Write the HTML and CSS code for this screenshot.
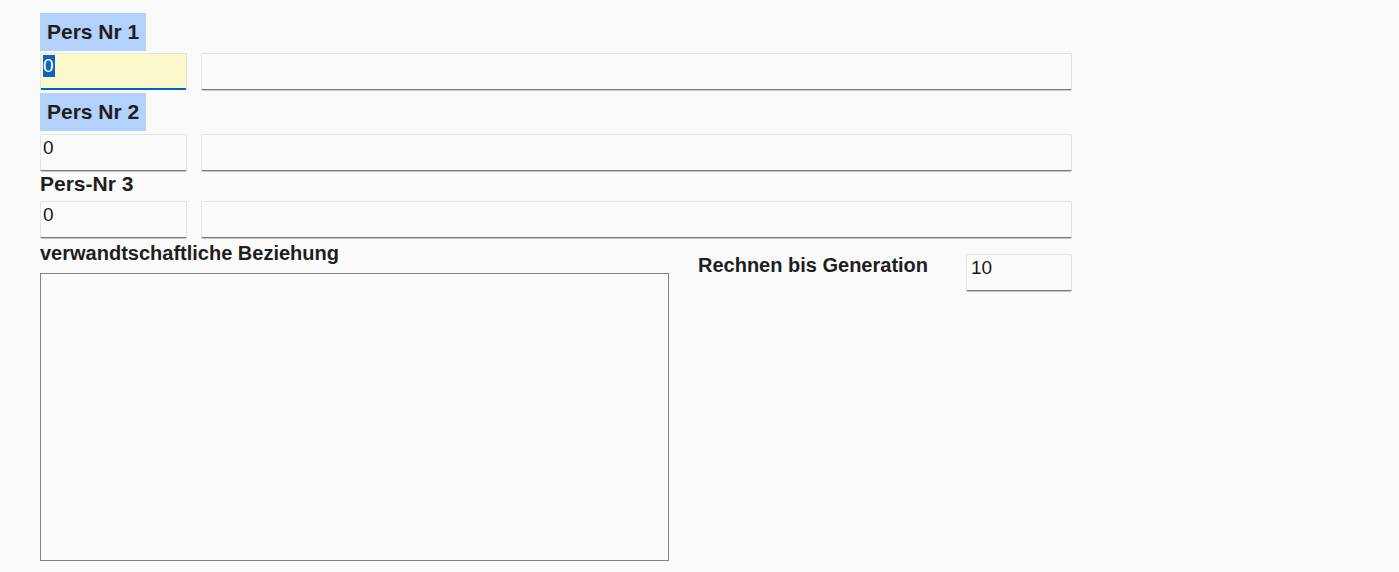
FILE: index.html
```html
<!DOCTYPE html>
<html lang="de">

<head>
    <meta charset="UTF-8">
    <meta name="viewport" content="width=device-width, initial-scale=1.0">
    <title>Verwandtschaft berechnen</title>
    <link rel="stylesheet" href="styles.css">
</head>

<body>
    <form class="relation-form" id="relationForm">
        <label class="pers-label marked" for="pers1">Pers Nr 1</label>
        <div class="pers-row">
            <!-- active field, value selected -->
            <div class="field nr active" id="pers1"><span class="sel">0</span></div>
            <input type="text" class="field name" id="name1">
        </div>

        <label class="pers-label marked row-gap" for="pers2">Pers Nr 2</label>
        <div class="pers-row row-gap">
            <input type="text" class="field nr" id="pers2" value="0">
            <input type="text" class="field name" id="name2">
        </div>

        <label class="pers-label plain" for="pers3">Pers-Nr 3</label>
        <div class="pers-row third">
            <input type="text" class="field nr" id="pers3" value="0">
            <input type="text" class="field name" id="name3">
        </div>

        <div class="bottom">
            <div class="relation">
                <label for="relation">verwandtschaftliche Beziehung</label>
                <textarea id="relation" class="result"></textarea>
            </div>
            <div class="generation">
                <label for="generation">Rechnen bis Generation</label>
                <input type="text" class="field gen" id="generation" value="10">
            </div>
        </div>
    </form>
</body>

</html>
```

FILE: styles.css
```css
body {
    font-family: "Liberation Sans", Arial, sans-serif;
    background-color: #fafafa;
    color: #1e1e1e;
    margin: 0;
    padding: 0;
}

.relation-form {
    display: flex;
    flex-direction: column;
    width: 1032px;
    margin-left: 40px;
    padding-top: 13px;
}

label {
    font-weight: bold;
    font-size: 20px;
    line-height: 23px;
}

.pers-label {
    align-self: flex-start;
    font-size: 21px;
    line-height: 24px;
}

.marked {
    background-color: #b3d1fa;
    padding: 7px;
}

.plain {
    margin-top: 1px;
}

.row-gap {
    margin-top: 3px;
}

.pers-row {
    display: flex;
    gap: 14px;
    margin-top: 2px;
}

.pers-row.row-gap {
    margin-top: 3px;
}

.pers-row.third {
    margin-top: 5px;
}

.field {
    box-sizing: border-box;
    height: 37px;
    margin: 0;
    padding: 0 2px 10px;
    border: 1px solid #e4e4e4;
    border-bottom-color: #7c7c7c;
    border-radius: 2px;
    box-shadow: 0 1px 0 #c4c4c4;
    background-color: #fbfbfb;
    font-family: "Liberation Sans", Arial, sans-serif;
    font-size: 19px;
    color: #1a1a1a;
    outline: none;
}

.nr {
    width: 147px;
}

.name {
    flex: 1;
}

.active {
    padding-top: 1px;
    line-height: 22px;
    background-color: #fbf9cc;
    border-bottom: 2px solid #0063c1;
    box-shadow: none;
}

.sel {
    display: inline-block;
    background-color: #0f63c6;
    color: #fff;
    padding-right: 1px;
}

.bottom {
    display: flex;
    margin-top: 4px;
}

.relation {
    display: flex;
    flex-direction: column;
}

.result {
    box-sizing: border-box;
    width: 629px;
    height: 288px;
    margin: 8px 0 0;
    border: 1px solid #80818c;
    background-color: #fbfbfb;
    resize: none;
}

.generation {
    flex: 1;
    display: flex;
    justify-content: space-between;
    align-items: flex-start;
    margin: 12px 0 0 29px;
}

.gen {
    width: 106px;
    padding-left: 4px;
}
```
